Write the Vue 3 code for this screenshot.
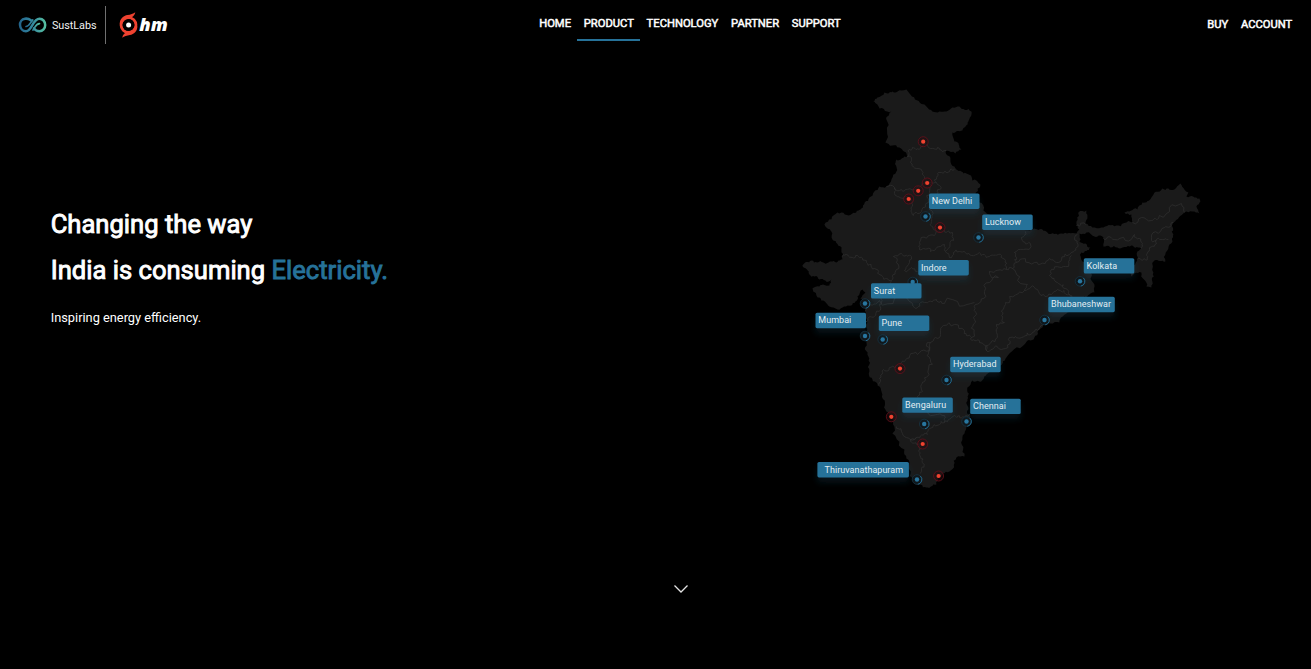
<script setup>
const links = [
  { label: 'HOME' },
  { label: 'PRODUCT', active: true },
  { label: 'TECHNOLOGY' },
  { label: 'PARTNER' },
  { label: 'SUPPORT' },
]

// Adds small deterministic wiggles so that borders look like real terrain.
function rough(flat, close, amp) {
  let pts = []
  for (let i = 0; i < flat.length; i += 2) pts.push([flat[i], flat[i + 1]])
  if (close) pts.push(pts[0])
  let seed = 7
  const rnd = () => {
    seed = (seed * 16807) % 2147483647
    return seed / 2147483647 - 0.5
  }
  for (let k = 0; k < 3; k++) {
    const next = [pts[0]]
    for (let i = 1; i < pts.length; i++) {
      const [ax, ay] = pts[i - 1]
      const [bx, by] = pts[i]
      const dx = bx - ax
      const dy = by - ay
      if (Math.hypot(dx, dy) > 2.6) {
        const r = rnd() * amp * (k ? 1.3 : 0.6)
        next.push([(ax + bx) / 2 - dy * r, (ay + by) / 2 + dx * r])
      }
      next.push(pts[i])
    }
    pts = next
  }
  return 'M' + pts.map((p) => p[0].toFixed(1) + ' ' + p[1].toFixed(1)).join('L') + (close ? 'Z' : '')
}

const land = rough([
  874, 101.7, 878, 98, 885, 93, 896, 93, 902, 91, 907, 90, 911, 95, 918, 101, 927, 107, 933, 112, 947, 112, 953, 108, 960, 107,
  972, 112, 969, 122, 963, 131, 953, 133, 955, 142, 962, 150, 956, 154, 947, 151, 951, 160, 952, 165, 957, 170, 967, 174, 981, 185,
  976, 194, 984, 211, 1000, 222, 1018, 228, 1032, 230, 1043, 230, 1048, 233, 1062, 234, 1077, 234, 1080, 230, 1077, 223, 1079, 213, 1087, 211,
  1088, 217, 1086, 224, 1093, 228, 1102, 228, 1117, 226, 1133, 223, 1132, 215, 1125, 213, 1138, 210, 1143, 203, 1152, 198,
  1163, 189, 1175, 190, 1181, 184, 1185, 190, 1189, 193, 1187, 197, 1200, 199, 1201, 202, 1197, 207, 1200, 214, 1193, 212, 1185, 213,
  1174, 223, 1174, 235, 1170, 245, 1166, 262, 1155, 261, 1154, 273, 1152, 288, 1147, 287, 1142, 273, 1135, 274, 1132, 277,
  1128, 270, 1134, 266, 1138, 260, 1138, 252, 1143, 248, 1132, 246, 1118, 248, 1104, 247, 1104, 238, 1101, 236, 1095, 237, 1087, 233,
  1080, 234, 1080, 242, 1091, 248, 1082, 253, 1083, 262, 1088, 268, 1092, 277, 1095, 293, 1085, 297, 1078, 302, 1068, 313,
  1060, 323, 1043, 328, 1035, 338, 1025, 345, 1007, 358, 1001, 366, 987, 375, 980, 382, 973, 381, 968, 388, 968, 400, 968, 411,
  972, 423, 963, 438, 965, 457, 957, 458, 950, 472, 938, 478, 937, 485, 927, 488, 915, 484, 909, 468, 905, 450, 895, 427,
  887, 412, 883, 395, 877, 383, 870, 372, 868, 355, 866, 340, 867, 328, 866, 310, 868, 304, 861, 299, 866, 293, 863, 290, 858, 297,
  852, 306, 838, 310, 830, 307, 820, 298, 813, 289, 820, 287, 830, 286, 832, 280, 820, 280, 810, 275, 803, 266, 812, 261,
  824, 263, 833, 262, 843, 260, 842, 250, 833, 240, 832, 232, 825, 225, 838, 213, 853, 214, 862, 209, 870, 198, 880, 187,
  887, 187, 897, 172, 897, 160, 908, 157, 900, 148, 886, 143, 887, 120, 892, 112, 878, 105,
], true, 0.4)

const borders = [
  [908, 157, 913, 148, 923, 147, 926, 144, 929, 148, 938, 148, 943, 152, 947, 151],
  [908, 157, 912, 158, 917, 169, 922, 170, 924, 176, 927, 181, 937, 183, 939, 173, 945, 172, 955, 170],
  [887, 187, 895, 188, 906, 190, 915, 190, 922, 186, 927, 181],
  [895, 188, 895, 194, 905, 197, 910, 198, 912, 210, 914, 216, 922, 212, 926, 205, 930, 193, 929, 184],
  [937, 183, 940, 190, 938, 200, 930, 210, 932, 222, 937, 232, 945, 231, 953, 233, 954, 241, 949, 249, 946, 252, 945, 245, 931, 252, 920, 250, 920, 243, 935, 236, 937, 231],
  [946, 252, 950, 258, 954, 253, 966, 253, 972, 256, 980, 253, 990, 257, 1002, 256, 1006, 261, 1007, 270, 990, 272, 991, 276, 999, 278, 985, 292, 976, 305, 975, 320, 972, 338, 980, 343, 988, 352],
  [1026, 232, 1022, 238, 1031, 244, 1015, 253, 1017, 263, 1013, 269, 1028, 285, 1025, 291, 1010, 303, 1002, 312, 1005, 323, 997, 325, 998, 338, 988, 352],
  [1007, 270, 1013, 269],
  [1017, 263, 1035, 263, 1050, 259, 1057, 263, 1070, 255, 1077, 248, 1078, 235],
  [1025, 291, 1038, 290, 1052, 295, 1058, 290, 1070, 295, 1078, 302],
  [1072, 256, 1062, 268, 1050, 276, 1058, 283, 1068, 290, 1071, 297],
  [988, 352, 1002, 350, 1010, 338, 1022, 338, 1035, 332, 1043, 326],
  [843, 257, 853, 258, 858, 256, 867, 263, 875, 269, 883, 277, 892, 281, 897, 270, 894, 257, 902, 254, 912, 257, 909, 265, 905, 271, 912, 268, 918, 272],
  [866, 312, 868, 304, 880, 301, 910, 302, 915, 308, 925, 303, 937, 300, 945, 304, 975, 303],
  [866, 322, 875, 317, 880, 305, 885, 295, 892, 281],
  [972, 338, 965, 331, 944, 326, 936, 338, 931, 343, 931, 360, 928, 377, 922, 385, 923, 392, 919, 400, 928, 412, 945, 416, 945, 423],
  [931, 343, 918, 355, 905, 362, 895, 368, 884, 370, 881, 382, 879, 385],
  [897, 427, 903, 434, 917, 438, 928, 435, 935, 425, 945, 423, 955, 416, 965, 418, 971, 414],
  [917, 438, 911, 440, 920, 444, 920, 455, 925, 465, 921, 474],
  [1104, 239, 1115, 240, 1135, 235, 1143, 244, 1142, 249],
  [1133, 223, 1152, 221, 1160, 216, 1182, 204, 1185, 213],
  [1174, 223, 1165, 228, 1152, 241, 1163, 240, 1169, 240],
  [1156, 241, 1150, 250, 1148, 260, 1138, 260],
  [1077, 226, 1086, 225],
].map((b) => rough(b, false, 0.7))

const bluePins = [
  [925.5, 216.5], [978.5, 237.5], [912.7, 282], [865, 303.5], [865, 336], [882.7, 339.5],
  [1080, 281.3], [1044.5, 320], [946.5, 380], [924.2, 424], [966.5, 421.5], [917, 479.5],
]
const redPins = [
  [923.2, 141.7], [927.2, 183], [918.2, 190.8], [908.7, 199], [940, 227.6],
  [900, 368.6], [891.3, 416.8], [922.7, 444], [938.6, 476],
]
const cities = [
  { name: 'New Delhi', x: 929, y: 193.5, len: 40.5 },
  { name: 'Lucknow', x: 982.2, y: 214.5, len: 36 },
  { name: 'Indore', x: 918.3, y: 260, len: 25.5 },
  { name: 'Surat', x: 871, y: 283.2, len: 21.3 },
  { name: 'Mumbai', x: 815.5, y: 312.8, len: 33 },
  { name: 'Pune', x: 878.8, y: 315.5, len: 20.5 },
  { name: 'Kolkata', x: 1083.8, y: 258.2, len: 30.5 },
  { name: 'Bhubaneshwar', x: 1048.3, y: 296.8, w: 66.5, len: 60 },
  { name: 'Hyderabad', x: 950.2, y: 356.8, len: 43.5 },
  { name: 'Bengaluru', x: 902.3, y: 397.4, len: 41 },
  { name: 'Chennai', x: 970.2, y: 398.7, len: 33 },
  { name: 'Thiruvanathapuram', x: 817.4, y: 462, w: 91.5, pad: 7.2, len: 78.5 },
]
</script>

<template>
  <div class="page">
    <header class="bar">
      <div class="brand">
        <svg class="logo" width="88" height="20" viewBox="0 0 88 20">
          <defs>
            <linearGradient id="loop" x1="0" x2="1">
              <stop offset="0" stop-color="#23658c" />
              <stop offset=".5" stop-color="#3489a0" />
              <stop offset="1" stop-color="#56bea0" />
            </linearGradient>
          </defs>
          <g fill="none" stroke="url(#loop)" stroke-width="2.5" stroke-linecap="round">
            <path d="M12.8 5.3C10.5 3.5 8.5 3.5 7 3.7C3.7 4.1 1.8 7 2 10C2.2 13.4 4.7 16.2 8 16.2C14 16.2 14.5 3.7 21.5 3.7C25 3.7 27.2 6.8 27.2 10C27.2 13.4 24.7 16.2 21.4 16.2C19.2 16.2 17.2 15.2 16 13.4" />
            <path d="M8 11.5C11.3 11.5 12 7.5 14.8 5M15 15C17.2 12 18 8.6 21.5 8.6" stroke-width="1.7" />
          </g>
          <text x="34" y="14" class="word" textLength="44.5" lengthAdjust="spacing">SustLabs</text>
        </svg>
        <span class="rule"></span>
        <svg class="ohm" width="52" height="30" viewBox="0 0 52 30">
          <circle cx="9.5" cy="15" r="7.4" fill="#000" stroke="#ee4230" stroke-width="2.9" />
          <path fill="#ee4230" d="M.8 14C.8 8.5 4.5 5.6 8.5 5C11.5 4.6 14.3 3.8 16.3 2.2C15.8 4.6 14.6 6.2 12.6 7.2L9 9L2.5 13Z" />
          <path fill="#ee4230" d="M18.4 16C18.4 21.5 14.9 24.4 10.9 25C7.9 25.4 5.1 26.2 3.3 27.8C3.6 25.4 4.8 23.8 6.8 22.8L10.4 21L16.9 17Z" />
          <circle cx="9.5" cy="15" r="5.9" fill="#000" />
          <circle cx="9.6" cy="15" r="2.5" fill="#fff" />
          <text x="20.3" y="20.6" class="hm" textLength="28.5" lengthAdjust="spacingAndGlyphs">hm</text>
        </svg>
      </div>
      <nav class="links">
        <a v-for="l in links" :key="l.label" :class="{ active: l.active }">{{ l.label }}</a>
      </nav>
      <div class="account"><a>BUY</a><a>ACCOUNT</a></div>
    </header>

    <main class="hero">
      <section class="copy">
        <h1>Changing the way<br />India is consuming <em>Electricity.</em></h1>
        <p>Inspiring energy efficiency.</p>
      </section>
      <svg class="map" width="420" height="420" viewBox="793 78 420 420">
        <defs>
          <filter id="glow" x="-20%" y="-50%" width="140%" height="240%">
            <feDropShadow dx="0" dy="5" stdDeviation="3" flood-color="#267199" flood-opacity=".16" />
          </filter>
        </defs>
        <g transform="translate(-.6 -.5)">
          <path :d="land" fill="#1a1a1a" />
          <path v-for="(b, i) in borders" :key="i" :d="b" class="border" />
        </g>
        <g v-for="(p, i) in redPins" :key="'r' + i">
          <circle :cx="p[0]" :cy="p[1]" r="5" fill="#250b10" stroke="#65101c" stroke-width=".8" fill-opacity=".5" />
          <circle :cx="p[0]" :cy="p[1]" r="2.1" fill="#f0432f" />
        </g>
        <g v-for="(p, i) in bluePins" :key="'b' + i" :transform="`translate(${p[0]} ${p[1]})`">
          <circle r="4.8" fill="#10171b" stroke="#183746" stroke-width=".7" />
          <path d="M3.4 -3.4A4.8 4.8 0 0 1 .8 4.8" fill="none" stroke="#23678a" stroke-width="1" />
          <circle r="2.2" fill="#28769f" />
        </g>
        <g v-for="c in cities" :key="c.name" :transform="`translate(${c.x} ${c.y})`">
          <rect :width="c.w || 50.5" height="15.4" rx="1.6" fill="#267299" filter="url(#glow)" />
          <text :x="c.pad || 2.8" y="10.5" :textLength="c.len" class="city">{{ c.name }}</text>
        </g>
      </svg>
    </main>

    <footer class="more">
      <svg width="16" height="10" viewBox="0 0 16 10">
        <path d="M1.5 1.5L8 8L14.5 1.5" fill="none" stroke="#e4e4e4" stroke-width="1.3" />
      </svg>
    </footer>
  </div>
</template>

<style>
body {
  background: #000;
  overflow: hidden;
}
</style>

<style scoped>
.page {
  display: flex;
  flex-direction: column;
  height: 669px;
  background: #000;
  color: #fff;
  font-family: Roboto, 'Liberation Sans', sans-serif;
}
.bar {
  display: flex;
  justify-content: space-between;
  height: 50px;
  box-sizing: border-box;
  padding: 0 18.8px 0 18px;
  font-size: 11.2px;
  font-weight: 400;
  -webkit-text-stroke: 0.5px #fff;
}
.brand {
  display: flex;
  align-items: center;
  width: 514.8px;
  -webkit-text-stroke: 0;
}
.word {
  font-size: 10.8px;
  fill: #f2f2f2;
}
.rule {
  width: 1px;
  height: 38px;
  margin-right: 13px;
  background: #707070;
}
.logo {
  flex: none;
  margin-right: -1px;
}
.hm {
  font: italic 800 17.5px 'Open Sans', 'Noto Sans', sans-serif;
  fill: #fff;
}
.links {
  display: flex;
  height: 41px;
  margin-right: auto;
}
.links a {
  box-sizing: border-box;
  padding: 17px 6.4px 0;
  line-height: 14px;
  border-bottom: 2px solid transparent;
}
.links a.active {
  border-color: #267299;
}
.account {
  display: flex;
  gap: 12.8px;
  padding-top: 18px;
  line-height: 14px;
}
.hero {
  display: flex;
  justify-content: space-between;
  height: 450px;
  padding: 28px 98px 0 50.7px;
  box-sizing: border-box;
}
.copy {
  padding-top: 123px;
}
h1 {
  margin: 0;
  font-size: 25.6px;
  line-height: 46px;
  font-weight: 400;
  -webkit-text-stroke: 0.9px currentColor;
}
em {
  font-style: normal;
  color: #267299;
}
p {
  margin: 16px 0 0;
  font-size: 12.8px;
  line-height: 18px;
}
.border {
  fill: none;
  stroke: #303030;
  stroke-width: 0.7;
}
.city {
  font-size: 9px;
  fill: #e3edf2;
}
.more {
  display: flex;
  justify-content: center;
  padding: 84px 0 0 51px;
}
</style>
